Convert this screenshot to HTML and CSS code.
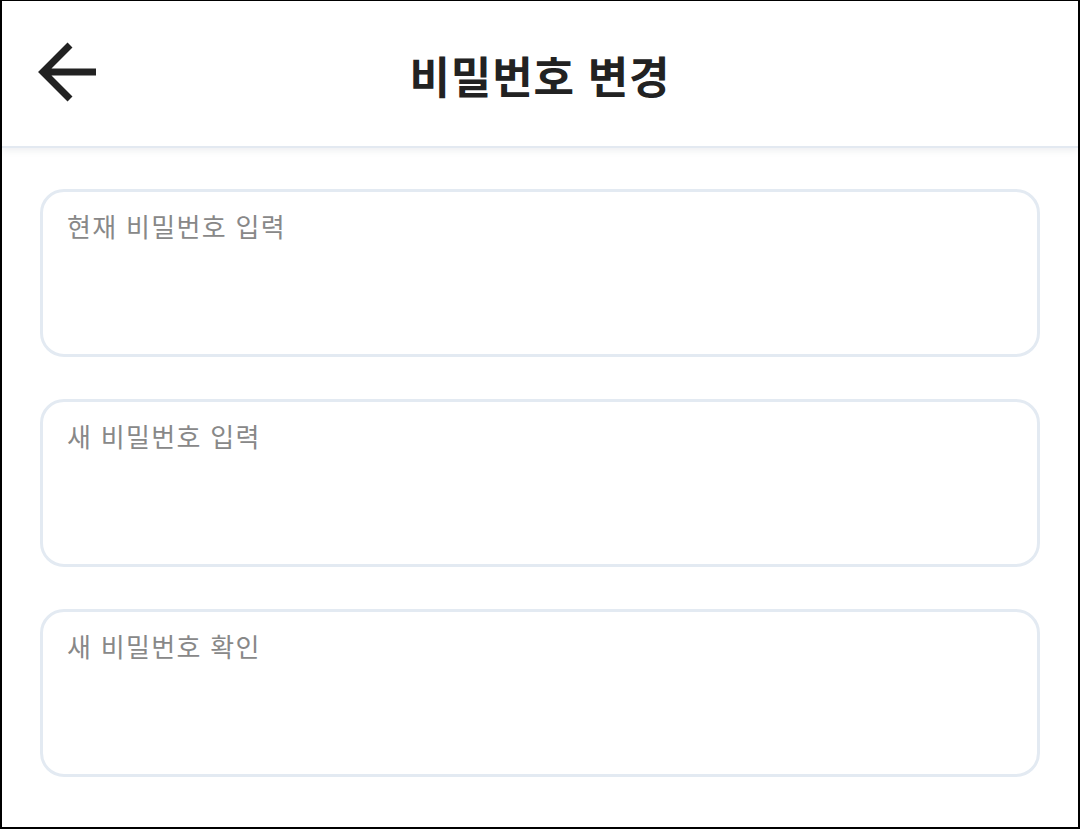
FILE: index.html
```html
<!DOCTYPE html>
<html lang="ko">
<head>
<meta charset="utf-8">
<title>비밀번호 변경</title>
<link rel="stylesheet" href="styles.css">
</head>
<body>
<div class="frame">
  <header class="header">
    <button class="back" aria-label="뒤로">
      <svg width="60" height="60" viewBox="0 0 60 60">
        <path d="M60 30H7M34 3L7 30L34 57" fill="none" stroke="#222" stroke-width="7" stroke-linecap="butt" stroke-linejoin="miter"/>
      </svg>
    </button>
    <h1 class="title">비밀번호 변경</h1>
  </header>
  <main class="form">
    <div class="field"><span class="placeholder">현재 비밀번호 입력</span></div>
    <div class="field"><span class="placeholder">새 비밀번호 입력</span></div>
    <div class="field"><span class="placeholder">새 비밀번호 확인</span></div>
  </main>
</div>
</body>
</html>
```

FILE: styles.css
```css
html, body {
  margin: 0;
  padding: 0;
  background: #fff;
}
body {
  font-family: "Noto Sans CJK KR", "Noto Sans", sans-serif;
}
.frame {
  box-sizing: border-box;
  width: 1080px;
  height: 829px;
  border-style: solid;
  border-color: #000;
  border-width: 1px 2px 2px 2px;
  overflow: hidden;
  background: #fff;
}
.header {
  position: relative;
  height: 145px;
  border-bottom: 2px solid #e3e9f1;
  box-shadow: 0 3px 6px rgba(120, 130, 145, 0.12);
  display: flex;
  align-items: center;
  justify-content: center;
}
.back {
  position: absolute;
  left: 34px;
  top: 41px;
  padding: 0;
  border: 0;
  background: none;
  width: 60px;
  height: 60px;
}
.back svg { display: block; }
.title {
  margin: 0;
  font-size: 44px;
  font-weight: 700;
  letter-spacing: 0.8px;
  color: #222;
  line-height: 1;
  margin-top: 2px;
}
.form {
  padding: 41px 38px 0 38px;
  display: flex;
  flex-direction: column;
  gap: 42px;
}
.field {
  box-sizing: border-box;
  height: 168px;
  border: 3px solid #e3eaf2;
  border-radius: 24px;
  padding: 16px 24px;
}
.placeholder {
  display: block;
  font-size: 26px;
  letter-spacing: 1.3px;
  line-height: 36px;
  color: #888;
}
```
